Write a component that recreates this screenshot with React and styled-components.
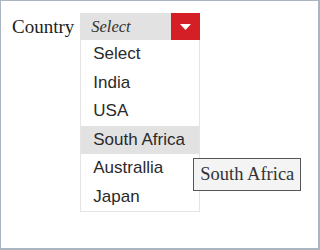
import styled, { createGlobalStyle } from 'styled-components';

const Global = createGlobalStyle`
  html, body { margin: 0; padding: 0; background: #fff; }
  #root { width: 320px; height: 250px; }
`;

const Frame = styled.div`
  box-sizing: border-box;
  width: 320px;
  height: 250px;
  border: 1px solid #aab4c2;
  border-right-width: 2px;
  border-bottom-width: 2px;
  background: #fff;
  padding: 12px 0 0 11px;
  display: flex;
  align-items: flex-start;
  gap: 6px;
  font-family: "Liberation Serif", "Times New Roman", serif;
`;

const Label = styled.span`
  font-size: 19px;
  color: #222;
  line-height: 27px;
`;

const Field = styled.div`
  width: 120px;
  display: flex;
  flex-direction: column;
`;

const SelectBox = styled.div`
  height: 27px;
  display: flex;
  align-items: center;
  background: #e2e2e2;
`;

const Value = styled.span`
  flex: 1;
  font-style: italic;
  font-size: 16.5px;
  color: #333;
  padding-left: 11px;
`;

const Caret = styled.div`
  width: 29px;
  height: 27px;
  background: #d51f27;
  display: flex;
  align-items: center;
  justify-content: center;
`;

const List = styled.ul`
  list-style: none;
  margin: 0;
  padding: 0;
  border: 1px solid #e4e4e4;
  border-top: none;
  background: #fff;
`;

const Item = styled.li`
  height: 28.5px;
  line-height: 28.5px;
  padding-left: 12px;
  font-family: "Liberation Sans", Arial, sans-serif;
  font-size: 17px;
  color: #2a2a2a;
  background: ${(p) => (p.$active ? '#e2e2e2' : 'transparent')};
`;

const Tip = styled.div`
  margin-top: 145px;
  margin-left: -13px;
  padding: 0 6px;
  height: 31px;
  line-height: 31px;
  border: 1px solid #555;
  background: #f4f4f4;
  font-size: 18.5px;
  color: #333;
`;

const options = ['Select', 'India', 'USA', 'South Africa', 'Australlia', 'Japan'];

export default function App() {
  return (
    <>
      <Global />
      <Frame>
        <Label>Country</Label>
        <Field>
          <SelectBox>
            <Value>Select</Value>
            <Caret>
              <svg width="11" height="6" viewBox="0 0 11 6">
                <path d="M0 0 L11 0 L5.5 6 Z" fill="#fff" />
              </svg>
            </Caret>
          </SelectBox>
          <List>
            {options.map((o) => (
              <Item key={o} $active={o === 'South Africa'}>{o}</Item>
            ))}
          </List>
        </Field>
        <Tip>South Africa</Tip>
      </Frame>
    </>
  );
}
